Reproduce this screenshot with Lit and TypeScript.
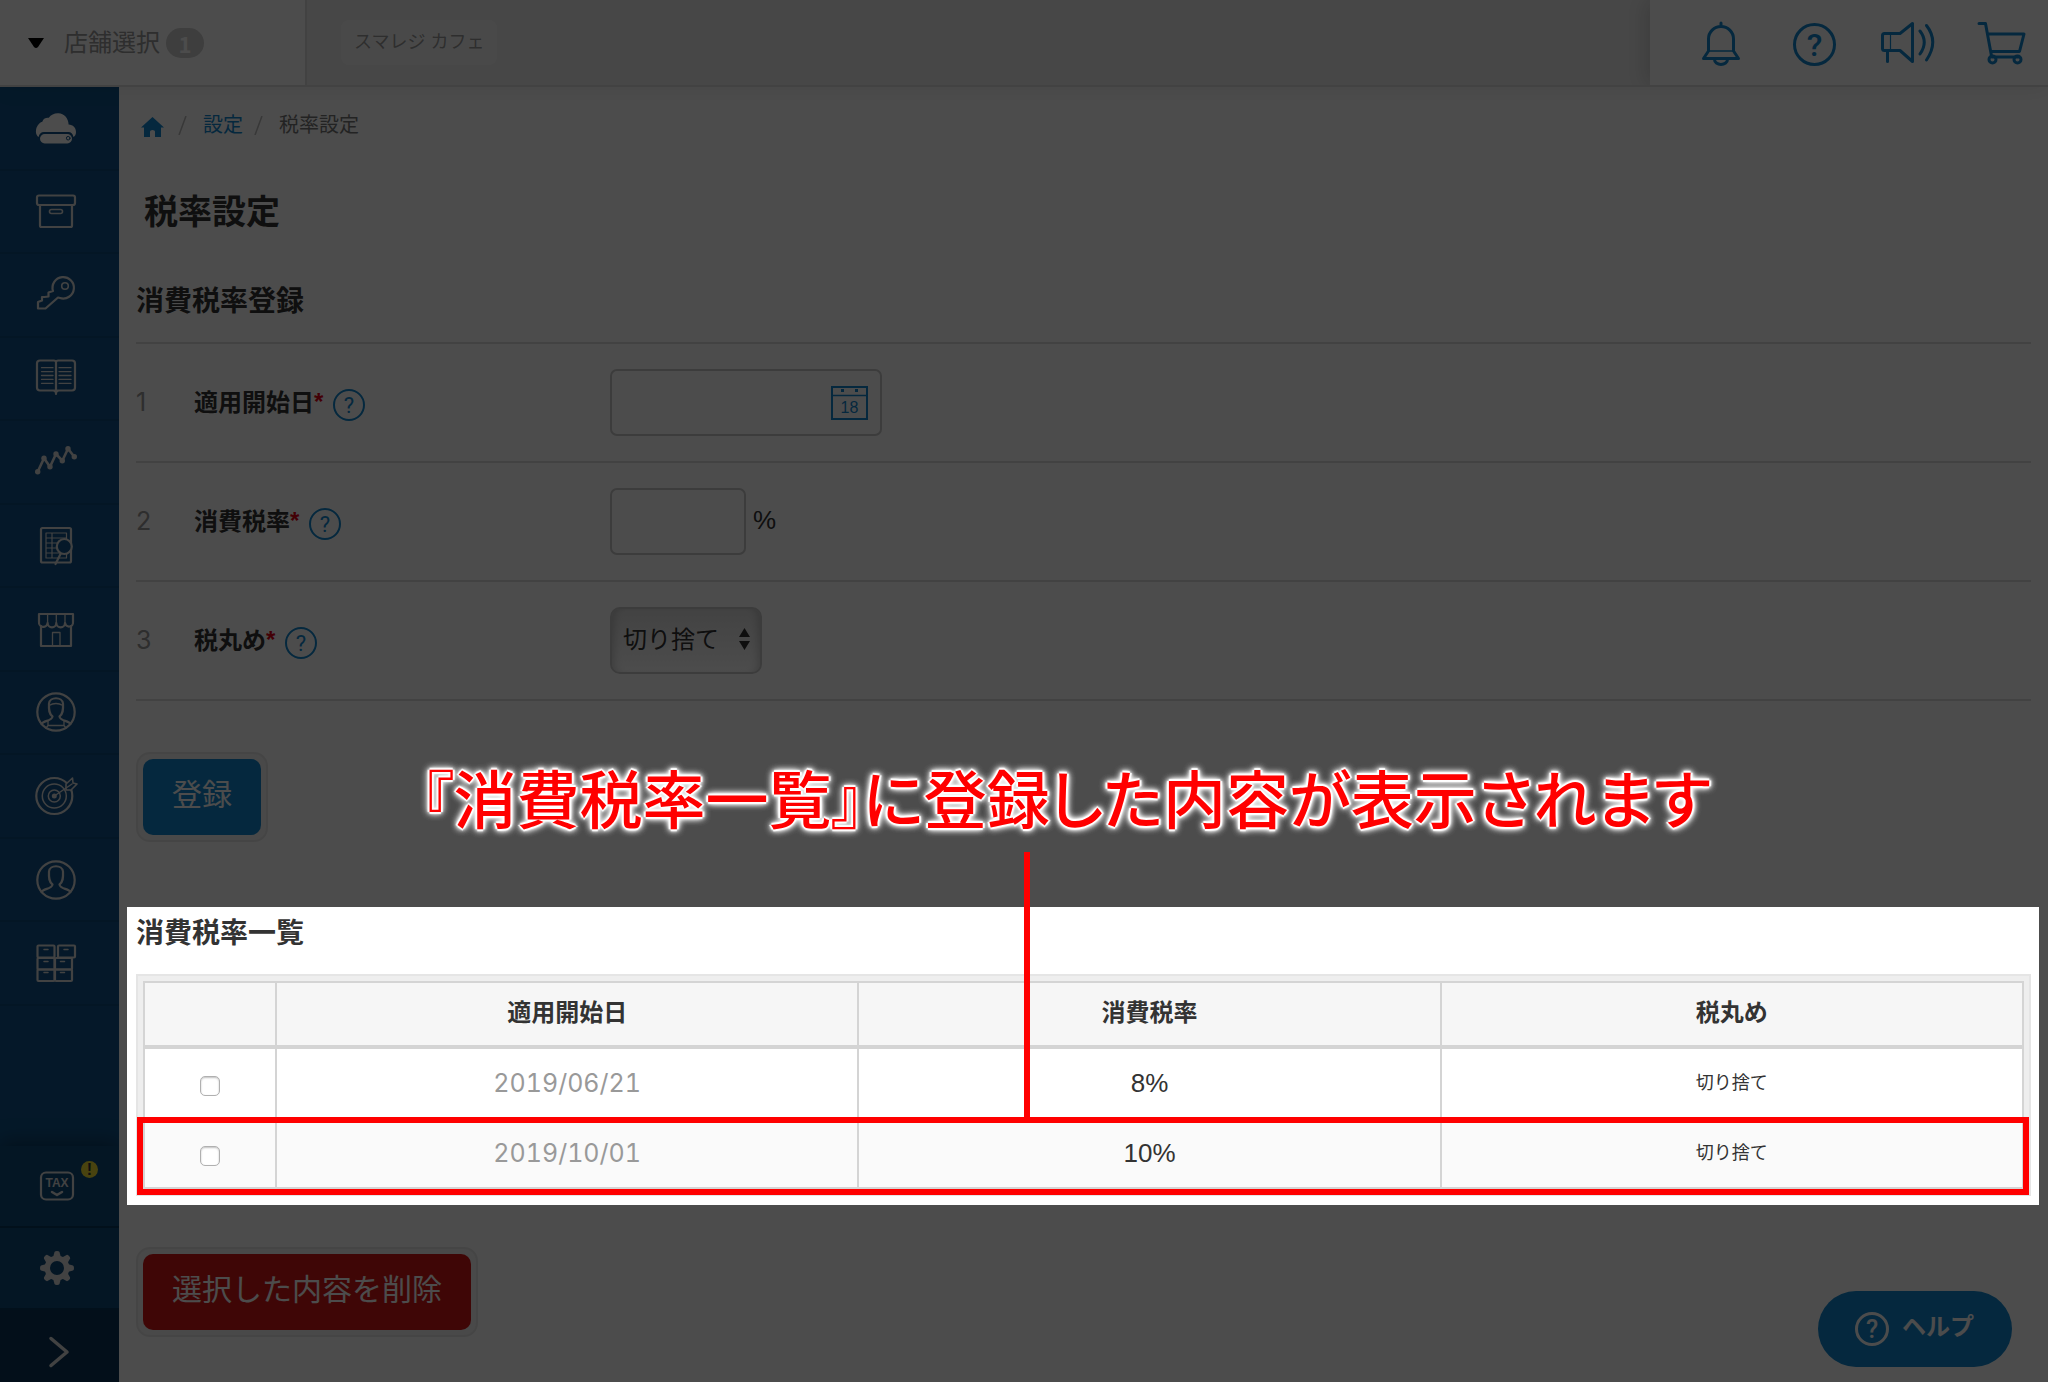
import { LitElement, html, svg, css } from "lit";
import { customElement, property } from "lit/decorators.js";

const glyphs: Record<string, unknown> = {
  cloud: svg`<g fill="#fff" stroke="none"><path d="M4.600 31C1.500 29 1.500 24.500 2.600 21.500C4 18 6.500 16.200 8.300 15.800C9.500 12 12.500 11.500 14.800 11.800C17 8.500 20.500 7 24.500 7.200C30 7.500 34.500 12 34.600 18.600C39 18.800 42 22 42 26C42 28.500 41 30.300 39.400 31C38.800 27.800 37 26 34.500 26H10C7 26 5 28 4.600 31Z"/><rect x="6" y="28" width="32" height="9.500" rx="4.700"/></g><circle cx="34.200" cy="32.200" r="1.800" fill="none" stroke="#115389" stroke-width="1"/>`,
  box: svg`<g transform="translate(0 -1)"><rect x="3" y="6.500" width="38" height="9.500" rx="2"/><path d="M6 16V36.500Q6 38 7.500 38H36.500Q38 38 38 36.500V16"/><rect x="15.500" y="20.500" width="13" height="4" rx="2" stroke-width="1.600"/></g>`,
  key: svg`<g transform="translate(0 -2)"><path d="M19 20A10.700 10.700 0 1 1 26 27L24 26.500L11.500 37.500H4V31L8 29.500V26H10.500L14.500 25.500V21.500Z"/><circle cx="31" cy="15" r="3.300" stroke-width="1.600"/></g>`,
  book: svg`<g transform="translate(0 -2)"><path d="M22 7Q21.500 5.500 20 5.500H6Q3 5.500 3 8.500V32.500Q3 35.500 6 35.500H20L22 37L24 35.500H38Q41 35.500 41 32.500V8.500Q41 5.500 38 5.500H24Q22.500 5.500 22 7V39"/><path stroke-width="1.300" d="M7.500 12.700H19M7.500 16.600H19M7.500 20.500H19M7.500 24.400H19M7.500 28.300H19M25 12.700H37M25 16.600H37M25 20.500H37M25 24.400H37M25 28.300H37"/></g>`,
  graph: svg`<g transform="translate(0 -2)"><path stroke-width="2.600" d="M3.700 33.700L10 20.300L16 28.700L22 16L28.300 22.700L34 10.700L40.300 18.700"/><g fill="#ddd" stroke="none"><circle cx="3.700" cy="33.700" r="2.700"/><circle cx="10" cy="20.300" r="2.700"/><circle cx="16" cy="28.700" r="2.700"/><circle cx="22" cy="16" r="2.700"/><circle cx="28.300" cy="22.700" r="2.700"/><circle cx="34" cy="10.700" r="2.700"/><circle cx="40.300" cy="18.700" r="2.700"/></g></g>`,
  sheet: svg`<rect x="7" y="4" width="30" height="34.500" rx="1.500"/><path stroke-width="1.200" d="M12 9H32.500V34H12ZM12 14H32.500M12 19H32.500M12 24H32.500M12 29H32.500M18 9V34"/><path d="M27 29L21.500 40"/><circle cx="30.300" cy="22.500" r="7.500" fill="#115389"/>`,
  store: svg`<g transform="translate(0 1)"><path d="M5 6H39V14A4 4 0 0 1 31 15A4.300 4.300 0 0 1 22.300 15A4.300 4.300 0 0 1 13.600 15A4.300 4.300 0 0 1 5 14Z"/><path d="M7 18V38H37V18"/><path stroke-width="1.300" d="M13.600 6V15M22.300 6V15M31 6V15M18.500 38V24.500H26V38"/></g>`,
  staff: svg`<g transform="translate(0 -1)"><circle cx="22" cy="22" r="18.700"/><path d="M7.500 34C9.500 30.500 18 31 18.500 26.500C15 24 14.700 20 15 13.500C15.500 6.500 28.500 6.500 29 13.500C29.300 20 29 24 25.500 26.500C26 31 34.500 30.500 36.500 34"/><path stroke-width="1.300" d="M15 15.500Q22 11.500 29 15.500M14 31V35.500H30V31M14 35.500L12 38M30 35.500L32 38"/></g>`,
  target: svg`<circle cx="20.300" cy="22" r="18"/><circle cx="20.300" cy="22" r="12" stroke-width="1.500"/><circle cx="20.300" cy="22" r="6" stroke-width="1.500"/><circle cx="20.300" cy="22" r="2.500" fill="#ddd" stroke="none"/><path d="M32 10L38.500 4L39 9L43 10L37 16H32Z" fill="#115389" stroke-width="1.600"/><path stroke-width="1.500" d="M20.300 22L38 10"/>`,
  user: svg`<circle cx="22" cy="22" r="18.700"/><path d="M7.500 34C9.500 30.500 18 31 18.500 26.500C15 24 14.700 20 15 13.500C15.500 6.500 28.500 6.500 29 13.500C29.300 20 29 24 25.500 26.500C26 31 34.500 30.500 36.500 34"/>`,
  drawers: svg`<rect x="3.500" y="4.500" width="17" height="12" rx="1"/><rect x="24" y="4.500" width="17" height="12" rx="1"/><rect x="3.500" y="17" width="17" height="11.500" rx="1"/><rect x="21" y="17" width="17" height="11.500" rx="1"/><rect x="3.500" y="28.500" width="17" height="11.500" rx="1"/><rect x="21" y="28.500" width="17" height="11.500" rx="1"/><path stroke-width="1.500" d="M10 8.500H14M30 8.500H34M10 20.500H14M26.500 20.500H30.500M10 31.500H14M26.500 31.500H30.500"/>`,
  tax: svg`<rect x="6" y="8.500" width="32" height="27" rx="5"/><text x="22" y="23" text-anchor="middle" font-family="Liberation Sans, sans-serif" font-size="12" font-weight="bold" fill="#ddd" stroke="none">TAX</text><path stroke-width="2.500" d="M17 28L22 31L27 28"/>`,
  gear: svg`<g fill="#ddd" stroke="none"><path fill-rule="evenodd" d="M22 9.500A12.500 12.500 0 1 0 22 34.500A12.500 12.500 0 1 0 22 9.500ZM22 15A7 7 0 1 1 22 29A7 7 0 1 1 22 15Z"/>${[0, 45, 90, 135, 180, 225, 270, 315].map(
    (a) => svg`<path transform="rotate(${a} 22 22)" d="M18 11.500L19.500 6Q20 5 22 5Q24 5 24.500 6L26 11.500Z"/>`
  )}</g>`,
  chevron: svg`<path stroke-width="3.500" d="M16 8.500L32 22L16 35.500"/>`,
};

@customElement("nav-icon")
class NavIcon extends LitElement {
  @property() name = "";
  static styles = css`
    :host { display: block; width: 44px; height: 44px; }
    .glyph { display: block; overflow: visible; }
  `;
  render() {
    return html`<svg class="glyph" width="44" height="44" viewBox="0 0 44 44" fill="none" stroke="#ddd" stroke-width="2.200" stroke-linecap="round" stroke-linejoin="round" aria-hidden="true">${glyphs[this.name]}</svg>`;
  }
}

const navItems = [
  ["cloud", "ホーム"], ["box", "商品"], ["key", "権限"], ["book", "取引"], ["graph", "売上分析"], ["sheet", "日報"],
  ["store", "店舗"], ["staff", "スタッフ"], ["target", "販促"], ["user", "会員"], ["drawers", "在庫"],
];

const rates = [
  { date: "2019/06/21", rate: "8%", rounding: "切り捨て" },
  { date: "2019/10/01", rate: "10%", rounding: "切り捨て" },
];

@customElement("app-root")
class AppRoot extends LitElement {
  static styles = css`
    :host {
      display: block;
      position: relative;
      min-height: 100vh;
      overflow: hidden;
      background: #fff;
      color: #333;
      font-family: "Liberation Sans", "Noto Sans CJK JP", sans-serif;
      font-size: 24px;
      line-height: 36px;
    }
    *, *::before, *::after { box-sizing: border-box; }
    button, input, select { font: inherit; color: inherit; margin: 0; }
    h1, h2, p, ul, ol { margin: 0; padding: 0; list-style: none; }
    a { color: #1187cf; text-decoration: none; }

    .topbar {
      position: relative;
      z-index: 1;
      display: flex;
      height: 87px;
      background: #eee;
      border-bottom: 2px solid #dedede;
      box-shadow: 0 2px 20px rgba(0, 0, 0, 0.08);
    }
    .store-picker {
      display: flex;
      align-items: center;
      width: 307px;
      padding: 0 0 0 28px;
      border: 0;
      border-right: 2px solid #dedede;
      background: #fff;
      color: #999;
    }
    .caret { width: 16px; height: 10px; margin-right: 20px; }
    .count {
      margin-left: 6px;
      width: 38px;
      height: 30px;
      border-radius: 15px;
      background: #cfcfcf;
      color: #fff;
      font-family: "Noto Sans CJK JP", sans-serif;
      font-size: 22px;
      font-weight: bold;
      line-height: 30px;
      text-align: center;
    }
    .store-area { display: flex; flex: 1; align-items: center; padding: 0 34px; }
    .store-name {
      padding: 0 13px;
      border-radius: 8px;
      background: #f6f6f6;
      color: #999;
      font-size: 18px;
      line-height: 45px;
    }
    .tools {
      display: flex;
      align-items: center;
      justify-content: space-between;
      width: 398px;
      padding: 3px 19px 0 44px;
      background: #fff;
      box-shadow: -4px 0 20px rgba(0, 0, 0, 0.16);
      clip-path: inset(0 0 0 -30px);
    }
    .tool { width: 54px; padding: 0; border: 0; background: none; color: #1187cf; }
    .tool svg { display: block; margin: 0 auto; }

    .body { display: flex; min-height: calc(100vh - 87px); }
    .sidebar {
      display: flex;
      flex: none;
      flex-direction: column;
      justify-content: space-between;
      width: 119px;
      background: #115389;
    }
    .nav-link {
      position: relative;
      display: flex;
      align-items: center;
      width: 100%;
      height: 84px;
      padding: 0 0 0 34px;
      border: 0;
      border-bottom: 2px solid #0e4a7c;
      background: none;
    }
    .nav li:nth-child(even) .nav-link { height: 83px; }
    .lower { box-shadow: 0 -4px 20px rgba(0, 0, 0, 0.35); clip-path: inset(-30px 0 0 0); }
    .lower .nav-link { height: 82px; padding-left: 35px; background: #0f4a7a; border-color: #08365d; }
    .lower .expand { height: 72px; padding-top: 12px; background: #0b3559; border: 0; }
    .alert {
      position: absolute;
      top: 15px;
      left: 81px;
      width: 17px;
      height: 17px;
      border-radius: 50%;
      background: #f5e233;
      color: #333;
      font-size: 16px;
      font-weight: bold;
      line-height: 17px;
      text-align: center;
    }

    .main { flex: 1; min-width: 0; padding: 23px 17px 45px; }
    .crumbs { display: flex; align-items: center; gap: 16px; padding-left: 5px; font-size: 20px; line-height: 30px; color: #777; }
    .crumbs li { display: flex; align-items: center; gap: 11px; }
    .crumbs .home { display: block; padding: 4px 3px 0 0; line-height: 0; }
    .slash { width: 9px; height: 19px; }
    .page-title { margin: 47px 0 0 8px; font-size: 34px; line-height: 50px; }
    .section-title { font-size: 28px; line-height: 40px; }
    .register .section-title { margin-top: 45px; }
    .fields { margin-top: 20px; border-top: 2px solid #dedede; }
    .field { display: flex; align-items: center; height: 119px; border-bottom: 2px solid #dedede; }
    .num { width: 58px; padding-bottom: 2px; font-family: Inter, sans-serif; font-size: 25px; color: #999; }
    .name { display: flex; align-items: center; width: 416px; }
    .name label { font-weight: bold; }
    .req { align-self: flex-start; width: 19px; color: #e00015; font-weight: bold; }
    .hint { padding: 5px 0 0; border: 0; background: none; color: #1187cf; line-height: 0; }
    .box {
      height: 67px;
      padding: 0 12px;
      border: 2px solid #c8c8c8;
      border-radius: 7px;
      background: #fff;
    }
    .date { display: flex; align-items: center; justify-content: space-between; width: 272px; }
    .date input { flex: 1; min-width: 0; border: 0; background: none; outline: none; }
    .cal { padding: 0; border: 0; background: none; color: #1187cf; line-height: 0; }
    .percent { width: 136px; }
    .unit { margin-left: 7px; padding-bottom: 4px; font-size: 26px; }
    .select { position: relative; width: 152px; }
    .select select {
      display: block;
      width: 100%;
      height: 67px;
      padding: 0 11px 2px;
      appearance: none;
      border: 2px solid #c8c8c8;
      border-radius: 10px;
      background: linear-gradient(#dfdfdf, #fff);
      box-shadow: inset 8px 0 8px -6px rgba(0, 0, 0, 0.18), inset -8px 0 8px -6px rgba(0, 0, 0, 0.18);
    }
    .arrows { position: absolute; top: 21px; right: 12px; pointer-events: none; }

    .frame {
      display: inline-block;
      padding: 5px;
      border: 2px solid #e8e8e8;
      border-radius: 14px;
      background: #f3f3f3;
      vertical-align: top;
    }
    .action {
      display: block;
      height: 76px;
      padding: 0 29px 4px;
      border: 0;
      border-radius: 10px;
      background: #1187cf;
      color: #fff;
      font-size: 30px;
    }
    .danger { background: #d41414; }
    .submit { margin-top: 51px; }
    .remove { margin-top: 42px; }

    .spotlight {
      position: relative;
      z-index: 10;
      margin: 65px -8px 0 -9px;
      padding: 7px 8px 9px 9px;
      background: #fff;
      box-shadow: 0 0 0 200vmax rgba(0, 0, 0, 0.7);
    }
    .table-frame { margin-top: 20px; padding: 5px; border: 2px solid #e5e5e5; background: #eee; }
    .rates { width: 100%; border-collapse: collapse; table-layout: fixed; background: #fff; }
    .rates th, .rates td { height: 70px; padding: 0; border: 2px solid #d4d4d4; text-align: center; }
    .rates th { height: 65px; padding-bottom: 2px; border-bottom-width: 4px; background: #f6f6f6; }
    .rates tr:first-child td { height: 71px; }
    .rates .pick { width: 132px; padding-top: 6px; }
    .rates tr:nth-child(even) td { background: #fafafa; }
    .rates .when { font-family: Inter, sans-serif; font-size: 25px; font-variant-numeric: tabular-nums; color: #999; }
    .rates .rate { font-size: 26px; }
    .rates .rounding { font-size: 18px; }
    .pick input {
      display: block;
      width: 20px;
      height: 20px;
      margin: 0 auto;
      appearance: none;
      border: 1px solid #b0b0b0;
      border-radius: 5px;
      background: #fff;
      box-shadow: inset 0 1px 2px rgba(0, 0, 0, 0.25);
    }
    .mark { position: absolute; left: 10px; right: 10px; bottom: 10px; height: 78px; border: 6px solid #f00; pointer-events: none; }
    .pointer { position: absolute; left: 897px; top: -55px; bottom: 86px; width: 6px; background: #f00; }
    .caption {
      position: absolute;
      left: 295px;
      top: -156px;
      font-family: "Noto Sans CJK JP", sans-serif;
      font-feature-settings: "palt";
      font-size: 63px;
      font-weight: 500;
      line-height: 90px;
      white-space: nowrap;
      color: #f00;
      text-shadow: 2px 0 1px #fff, -2px 0 1px #fff, 0 2px 1px #fff, 0 -2px 1px #fff, 0 0 4px #fff, 0 0 5px #fff, 0 0 7px #fff, 0 0 8px #fff, 0 0 8px #fff;
    }

    .help {
      position: absolute;
      right: 36px;
      bottom: 15px;
      z-index: 5;
      display: flex;
      align-items: center;
      gap: 13px;
      width: 194px;
      height: 76px;
      padding: 0 0 0 37px;
      border: 0;
      border-radius: 38px;
      background: #1187cf;
      color: #fff;
      font-weight: bold;
    }
    .help span { padding-bottom: 4px; }
  `;

  private question(size: number, stroke: number, font: number, weight: number) {
    const c = size / 2;
    return html`<svg width=${size} height=${size} viewBox="0 0 ${size} ${size}" aria-hidden="true">
      <circle cx=${c} cy=${c} r=${c - stroke / 2} fill="none" stroke="currentColor" stroke-width=${stroke} />
      <text x=${c} y=${c + font * 0.36} text-anchor="middle" font-family="Roboto, sans-serif" font-size=${font} font-weight=${weight} fill="currentColor">?</text>
    </svg>`;
  }

  private label(id: string, text: string) {
    return html`<div class="name">
      <label for=${id}>${text}</label><span class="req">*</span>
      <button class="hint" type="button" aria-label="${text}について">${this.question(32, 2, 22, 400)}</button>
    </div>`;
  }

  render() {
    return html`
      <header class="topbar">
        <button class="store-picker" type="button">
          <svg class="caret" viewBox="0 0 16 10" aria-hidden="true"><path d="M0 0H16L10 9Q8 11 6 9Z" /></svg>
          店舗選択<span class="count">1</span>
        </button>
        <div class="store-area"><span class="store-name">スマレジ カフェ</span></div>
        <div class="tools">
          <button class="tool" type="button" aria-label="お知らせ">
            <svg width="46" height="46" viewBox="0 0 46 46" fill="none" stroke="currentColor" stroke-width="3" stroke-linejoin="round" stroke-linecap="round">
              <path d="M10.500 30V18A12.500 12.500 0 0 1 35.500 18V30L40.500 37.500H5.500ZM23 2V5M16.500 38.500A6.500 5 0 0 0 29.500 38.500" /><path stroke-width="1.500" d="M11 30H35" />
            </svg>
          </button>
          <button class="tool" type="button" aria-label="ヘルプ">${this.question(43, 3, 32, 500)}</button>
          <button class="tool" type="button" aria-label="ニュース">
            <svg width="54" height="46" viewBox="0 0 54 46" fill="none" stroke="currentColor" stroke-width="3" stroke-linejoin="round" stroke-linecap="round">
              <path d="M3.500 12.500H19L31.500 2.500V40.500L19 29.500H3.500Q1.500 29.500 1.500 27.500V14.500Q1.500 12.500 3.500 12.500ZM6.500 30V40.500M39 10Q47.500 21 39 33M45.500 4.500Q58 20.500 45.500 39" /><path stroke-width="1.200" d="M9.500 12V29" />
            </svg>
          </button>
          <button class="tool" type="button" aria-label="カート">
            <svg width="50" height="46" viewBox="0 0 50 46" fill="none" stroke="currentColor" stroke-width="3" stroke-linejoin="round" stroke-linecap="round">
              <path d="M2 2.500H8.500L14.500 35M10.500 13H47L42.500 30.500H14" /><path d="M15 36H42" /><circle cx="15.500" cy="38.500" r="3.500" /><circle cx="40.500" cy="38.500" r="3.500" />
            </svg>
          </button>
        </div>
      </header>

      <div class="body">
        <nav class="sidebar">
          <ul class="nav">
            ${navItems.map(([icon, text]) => html`<li><button class="nav-link" type="button" aria-label=${text}><nav-icon name=${icon}></nav-icon></button></li>`)}
          </ul>
          <div class="lower">
            <button class="nav-link" type="button" aria-label="税率"><nav-icon name="tax"></nav-icon><span class="alert">!</span></button>
            <button class="nav-link" type="button" aria-label="設定"><nav-icon name="gear"></nav-icon></button>
            <button class="nav-link expand" type="button" aria-label="メニューを開く"><nav-icon name="chevron"></nav-icon></button>
          </div>
        </nav>

        <main class="main">
          <ol class="crumbs">
            <li>
              <a class="home" href="#" aria-label="ホーム"><svg width="23" height="20" viewBox="0 0 23 20" aria-hidden="true"><path fill="currentColor" d="M11.500 0L23 10.500H20V20H14V14.500Q14 13 11.500 13Q9 13 9 14.500V20H3V10.500H0Z" /></svg></a>
              ${this.slash()}
            </li>
            <li><a href="#">設定</a>${this.slash()}</li>
            <li>税率設定</li>
          </ol>
          <h1 class="page-title">税率設定</h1>

          <section class="register">
            <h2 class="section-title">消費税率登録</h2>
            <div class="fields">
              <div class="field">
                <span class="num">1</span>${this.label("start", "適用開始日")}
                <div class="box date">
                  <input id="start" type="text" />
                  <button class="cal" type="button" aria-label="カレンダー">
                    <svg width="37" height="34" viewBox="0 0 37 34" fill="none" stroke="currentColor" stroke-width="2" aria-hidden="true">
                      <path d="M1 1H36V33H1Z" /><path stroke-width="1.500" d="M1 9.500H36" /><path stroke-width="3" d="M10 4.500H13M24 4.500H27" />
                      <text x="18.500" y="27" text-anchor="middle" font-family="Liberation Sans, sans-serif" font-size="16" fill="currentColor" stroke="none">18</text>
                    </svg>
                  </button>
                </div>
              </div>
              <div class="field">
                <span class="num">2</span>${this.label("rate", "消費税率")}
                <input class="box percent" id="rate" type="text" /><span class="unit">%</span>
              </div>
              <div class="field">
                <span class="num">3</span>${this.label("rounding", "税丸め")}
                <div class="select">
                  <select id="rounding"><option>切り捨て</option></select>
                  <svg class="arrows" width="11" height="22" viewBox="0 0 11 22" fill="#333" aria-hidden="true"><path d="M5.500 0L11 9H0ZM5.500 22L11 13H0Z" /></svg>
                </div>
              </div>
            </div>
            <div class="frame submit"><button class="action" type="button">登録</button></div>
          </section>

          <section class="spotlight">
            <h2 class="section-title">消費税率一覧</h2>
            <div class="table-frame">
              <table class="rates">
                <thead><tr><th class="pick"></th><th>適用開始日</th><th>消費税率</th><th>税丸め</th></tr></thead>
                <tbody>
                  ${rates.map((r) => html`<tr>
                    <td class="pick"><input type="checkbox" aria-label=${r.date} /></td>
                    <td class="when">${r.date}</td><td class="rate">${r.rate}</td><td class="rounding">${r.rounding}</td>
                  </tr>`)}
                </tbody>
              </table>
            </div>
            <div class="mark"></div>
            <div class="pointer"></div>
            <p class="caption">『消費税率一覧』に登録した内容が表示されます</p>
          </section>

          <div class="frame remove"><button class="action danger" type="button">選択した内容を削除</button></div>
        </main>
      </div>

      <button class="help" type="button">${this.question(34, 3, 25, 500)}<span>ヘルプ</span></button>
    `;
  }

  private slash() {
    return html`<svg class="slash" viewBox="0 0 9 19" fill="none" stroke="#bbb" stroke-width="1.500" aria-hidden="true"><path d="M1 19L8 0" /></svg>`;
  }
}
